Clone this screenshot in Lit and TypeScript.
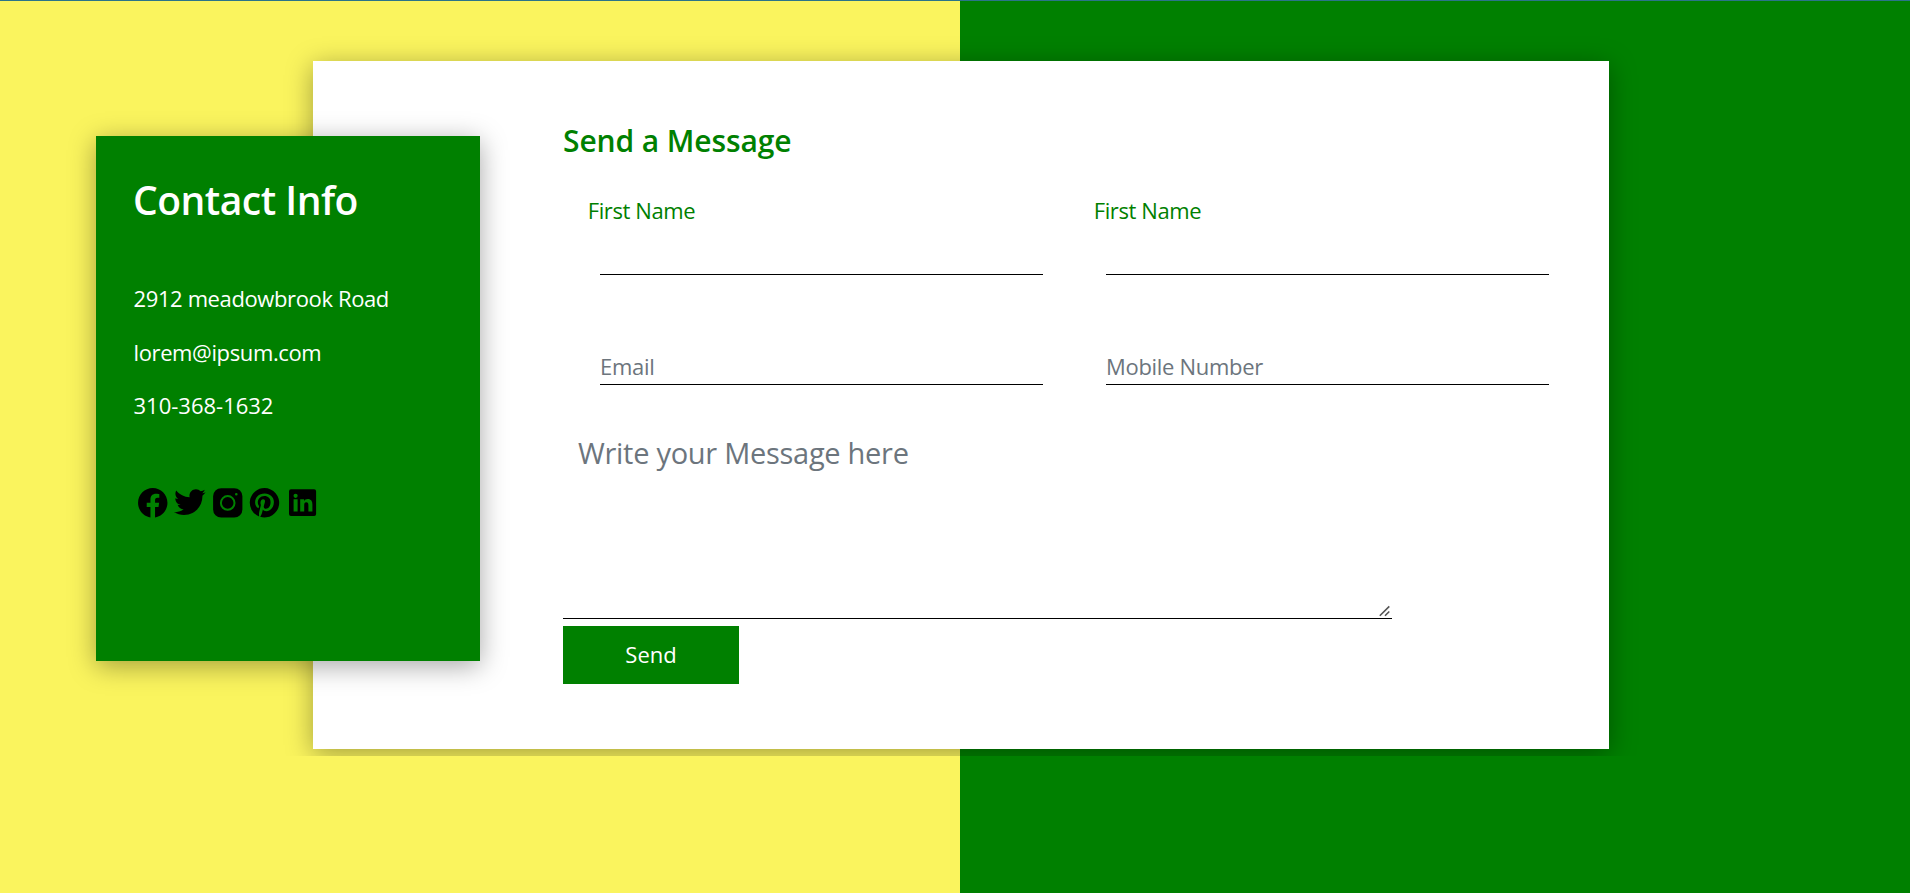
import { LitElement, html, css, svg } from "lit";
import { customElement } from "lit/decorators.js";

const facebook = svg`<path transform="translate(4.05 4.05) scale(1.8375)" d="M16 8.049c0-4.446-3.582-8.05-8-8.05C3.58 0 0 3.603 0 8.05c0 4.017 2.926 7.347 6.75 7.951v-5.625h-2.03V8.05H6.75V6.275c0-2.017 1.195-3.131 3.022-3.131.876 0 1.791.157 1.791.157v1.98h-1.009c-.993 0-1.303.621-1.303 1.258v1.51h2.218l-.354 2.326H9.25V16c3.824-.604 6.75-3.934 6.75-7.951"/>`;

const twitter = svg`<path transform="translate(3.1 1.75) scale(.63)" d="M50.06 10.44C48.21 11.26 46.23 11.81 44.15 12.06C46.28 10.79 47.91 8.77 48.68 6.37C46.69 7.55 44.48 8.4 42.14 8.86C40.27 6.86 37.6 5.62 34.64 5.62C28.96 5.62 24.36 10.22 24.36 15.9C24.36 16.7 24.45 17.49 24.63 18.24C16.08 17.81 8.5 13.72 3.43 7.5C2.54 9.02 2.04 10.79 2.04 12.67C2.04 16.23 3.85 19.38 6.61 21.23C4.93 21.18 3.34 20.71 1.95 19.94V20.07C1.95 25.05 5.5 29.21 10.2 30.16C9.34 30.39 8.43 30.52 7.49 30.52C6.83 30.52 6.18 30.45 5.55 30.33C6.87 34.41 10.66 37.39 15.16 37.47C11.64 40.23 7.21 41.87 2.39 41.87C1.56 41.87.74 41.82-.06 41.73C4.49 44.65 9.89 46.35 15.7 46.35C34.62 46.35 44.96 30.68 44.96 17.09C44.96 16.65 44.95 16.2 44.93 15.76C46.94 14.31 48.68 12.5 50.06 10.44Z"/>`;

const instagram = svg`<path fill-rule="evenodd" d="M12.2 4.2h13.1a8.1 8.1 0 0 1 8.1 8.1v13.1a8.1 8.1 0 0 1-8.1 8.1H12.2a8.1 8.1 0 0 1-8.1-8.1V12.3a8.1 8.1 0 0 1 8.1-8.1Zm6.5 6.9a7.8 7.8 0 1 0 0 15.6a7.8 7.8 0 0 0 0-15.6Zm0 2a5.8 5.8 0 1 1 0 11.6a5.8 5.8 0 0 1 0-11.6ZM27.3 8.9a1.3 1.3 0 1 0 0 2.6a1.3 1.3 0 0 0 0-2.6Z"/>`;

const pinterest = svg`<path transform="translate(3.8 4.05) scale(1.8375)" d="M8 0a8 8 0 0 0-2.915 15.452c-.07-.633-.134-1.606.027-2.297.146-.625.938-3.977.938-3.977s-.239-.479-.239-1.187c0-1.113.645-1.943 1.448-1.943.682 0 1.012.512 1.012 1.127 0 .686-.437 1.712-.663 2.663-.188.796.4 1.446 1.185 1.446 1.422 0 2.515-1.5 2.515-3.664 0-1.915-1.377-3.254-3.342-3.254-2.276 0-3.612 1.707-3.612 3.471 0 .688.265 1.425.595 1.826a.24.24 0 0 1 .056.23c-.061.252-.196.796-.222.907-.035.146-.116.177-.268.107-1-.465-1.624-1.926-1.624-3.1 0-2.523 1.834-4.84 5.286-4.84 2.775 0 4.932 1.977 4.932 4.62 0 2.757-1.739 4.976-4.151 4.976-.811 0-1.573-.421-1.834-.919l-.498 1.902c-.181.695-.669 1.566-.995 2.097A8 8 0 1 0 8 0"/>`;

const linkedin = svg`<path fill-rule="evenodd" d="M7 5.2h23.1a2 2 0 0 1 2 2v22.9a2 2 0 0 1-2 2H7a2 2 0 0 1-2-2V7.2a2 2 0 0 1 2-2Zm2.6 10.1v12.1h4V15.3Zm2-5.6a2.1 2.1 0 1 0 0 4.2a2.1 2.1 0 0 0 0-4.2Zm4.6 5.6v12.1h4v-6.1c0-1.7.5-3 2.1-3s2.1 1.3 2.1 3v6.1h4v-6.8c0-3.3-1.2-5.6-4.7-5.6c-1.8 0-2.9.8-3.6 2v-1.7Z"/>`;

const socials = [facebook, twitter, instagram, pinterest, linkedin];
const contacts = ["2912 meadowbrook Road", "lorem@ipsum.com", "310-368-1632"];

@customElement("app-root")
export class AppRoot extends LitElement {
  static styles = css`
    :host {
      display: block;
      box-sizing: border-box;
      height: 893px;
      overflow: hidden;
      border-top: 1px solid #2b7489;
      background: linear-gradient(90deg, #faf45e 960px, #008000 960px);
      font-family: "Segoe UI", "Open Sans", sans-serif;
      font-size: 22px;
    }
    *, *::before { box-sizing: border-box; }
    h1, h2, ul { margin: 0; padding: 0; list-style: none; }
    .section {
      position: relative;
      height: 755px;
      padding: 60px 301px 0 313px;
      overflow: hidden;
    }
    .card {
      height: 688px;
      padding: 61px 0 0 250px;
      background: #fff;
      box-shadow: 0 5px 25px rgba(0, 0, 0, 0.35);
    }
    .info {
      position: absolute;
      top: 135px;
      left: 96px;
      width: 384px;
      height: 525px;
      padding: 40px 37px;
      background: #008000;
      color: #fff;
      box-shadow: 0 5px 25px rgba(0, 0, 0, 0.35);
    }
    .heading {
      font-size: 39px;
      font-weight: 600;
      line-height: 48px;
      letter-spacing: -0.5px;
    }
    .contacts {
      margin: 48px 0 0 0.5px;
      line-height: 53.5px;
      letter-spacing: -0.38px;
    }
    .contacts li:last-child { letter-spacing: 0; }
    .socials { display: flex; margin: 51.3px 0 0 0.8px; }
    .socials svg { display: block; width: 37.5px; height: 37.5px; }
    .title {
      color: #008000;
      font-size: 30px;
      font-weight: 600;
      line-height: 38px;
      letter-spacing: -0.1px;
    }
    .fields {
      display: grid;
      grid-template-columns: 443px 443px;
      column-gap: 63px;
      margin: 34.5px 0 0 37px;
    }
    .label {
      display: block;
      margin-left: -12.3px;
      color: #008000;
      line-height: 30px;
      letter-spacing: -0.4px;
    }
    .input, .message {
      display: block;
      border: 0;
      border-bottom: 1px solid #000;
      border-radius: 0;
      background: transparent;
      outline: 0;
      font: inherit;
    }
    .input { width: 100%; height: 38px; padding: 0; letter-spacing: -0.3px; }
    .label + .input { margin: 12.5px 0 72px; }
    ::placeholder { color: #6c757d; opacity: 1; }
    .area { position: relative; width: 829px; margin-top: 40px; }
    .message {
      width: 100%;
      height: 194px;
      padding: 6px 15px;
      font-size: 29px;
      line-height: 44px;
      letter-spacing: -0.28px;
      resize: none;
    }
    .grip { position: absolute; right: 1px; bottom: 2px; width: 12px; height: 12px; }
    .send {
      display: block;
      width: 176px;
      height: 58px;
      margin-top: 7px;
      padding: 0 0 2px;
      border: 0;
      background: #008000;
      color: #fff;
      font: inherit;
    }
  `;

  render() {
    return html`
      <section class="section">
        <form class="card">
          <h2 class="title">Send a Message</h2>
          <div class="fields">
            ${[0, 1].map(() => html`
              <div>
                <label class="label">First Name</label>
                <input class="input" type="text" />
              </div>`)}
            <input class="input" type="text" placeholder="Email" />
            <input class="input" type="text" placeholder="Mobile Number" />
          </div>
          <div class="area">
            <textarea class="message" placeholder="Write your Message here"></textarea>
            <svg class="grip" viewBox="0 0 12 12" fill="none" stroke="#555" stroke-width="1.6">
              <path d="M.8 10.7 10.3 1.4M6 10.7 10.3 6.5" />
            </svg>
          </div>
          <button class="send" type="button">Send</button>
        </form>
        <aside class="info">
          <h1 class="heading">Contact Info</h1>
          <ul class="contacts">${contacts.map((c) => html`<li>${c}</li>`)}</ul>
          <div class="socials">
            ${socials.map((s) => html`<svg viewBox="0 0 37.5 37.5">${s}</svg>`)}
          </div>
        </aside>
      </section>
    `;
  }
}
